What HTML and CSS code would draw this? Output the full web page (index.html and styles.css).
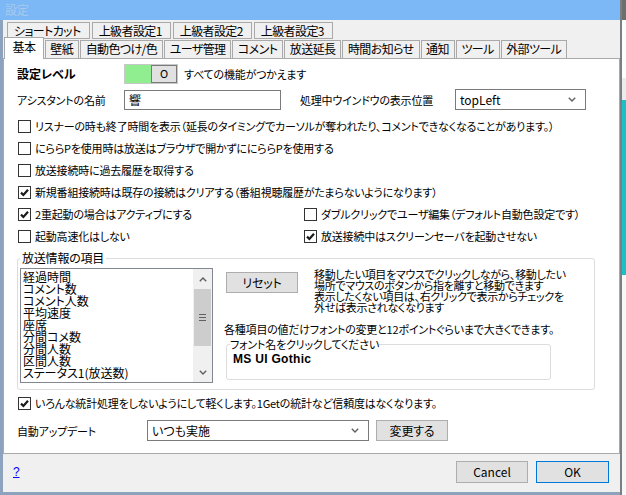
FILE: index.html
```html
<!DOCTYPE html>
<html lang="ja">
<head>
  <meta charset="UTF-8" />
  <title>設定</title>
  <link rel="stylesheet" href="styles.css">
</head>
<body>
  <div class="win">
    <header class="titlebar">設定</header>

    <div class="frame">
      <!-- タブ -->
      <nav class="tabs">
        <div class="tabrow back">
          <span class="tab">ショートカット</span>
          <span class="tab">上級者設定1</span>
          <span class="tab">上級者設定2</span>
          <span class="tab">上級者設定3</span>
        </div>
        <div class="tabrow front">
          <span class="tab on">基本</span>
          <span class="tab">壁紙</span>
          <span class="tab">自動色つけ/色</span>
          <span class="tab">ユーザ管理</span>
          <span class="tab">コメント</span>
          <span class="tab">放送延長</span>
          <span class="tab">時間お知らせ</span>
          <span class="tab">通知</span>
          <span class="tab">ツール</span>
          <span class="tab">外部ツール</span>
        </div>
      </nav>

      <!-- 基本タブ -->
      <main class="panel">
        <div class="row">
          <span class="label strong">設定レベル</span>
          <span class="toggle"><span class="knob">O</span></span>
          <span class="hint">すべての機能がつかえます</span>
        </div>

        <div class="row field">
          <span class="label">アシスタントの名前</span>
          <span class="input name">響</span>
          <span class="label pos-label">処理中ウインドウの表示位置</span>
          <span class="select pos">topLeft
            <svg viewBox="0 0 8 5"><path d="M.8 .8 4 4 7.2 .8"/></svg>
          </span>
        </div>

        <div class="checks">
          <label class="chk wide"><span class="box"></span>リスナーの時も終了時間を表示（延長のタイミングでカーソルが奪われたり、コメントできなくなることがあります。）</label>
          <label class="chk wide"><span class="box"></span>にららPを使用時は放送はブラウザで開かずににららPを使用する</label>
          <label class="chk wide"><span class="box"></span>放送接続時に過去履歴を取得する</label>
          <label class="chk wide"><span class="box on"><svg viewBox="0 0 11 11"><path d="M2 5.6 4.4 8 9 2.8"/></svg></span>新規番組接続時は既存の接続はクリアする（番組視聴履歴がたまらないようになります）</label>
          <label class="chk"><span class="box on"><svg viewBox="0 0 11 11"><path d="M2 5.6 4.4 8 9 2.8"/></svg></span>2重起動の場合はアクティブにする</label>
          <label class="chk right"><span class="box"></span>ダブルクリックでユーザ編集（デフォルト自動色設定です）</label>
          <label class="chk"><span class="box"></span>起動高速化はしない</label>
          <label class="chk right"><span class="box on"><svg viewBox="0 0 11 11"><path d="M2 5.6 4.4 8 9 2.8"/></svg></span>放送接続中はスクリーンセーバを起動させない</label>
        </div>

        <fieldset class="group">
          <legend>放送情報の項目</legend>
          <div class="listbox">
            <ul class="items">
              <li>経過時間</li>
              <li>コメント数</li>
              <li>コメント人数</li>
              <li>平均速度</li>
              <li>座席</li>
              <li>分間コメ数</li>
              <li>分間人数</li>
              <li>区間人数</li>
              <li>ステータス1(放送数)</li>
            </ul>
            <div class="vscroll">
              <span class="arrow"><svg viewBox="0 0 8 5"><path d="M.8 4.2 4 1 7.2 4.2"/></svg></span>
              <span class="thumb"><i></i><i></i><i></i></span>
              <span class="track"></span>
              <span class="arrow"><svg viewBox="0 0 8 5"><path d="M.8 .8 4 4 7.2 .8"/></svg></span>
            </div>
          </div>

          <div class="side">
            <div class="side-top">
              <button class="btn reset">リセット</button>
              <p class="howto">移動したい項目をマウスでクリックしながら、移動したい<br>場所でマウスのボタンから指を離すと移動できます<br>表示したくない項目は、右クリックで表示からチェックを<br>外せば表示されなくなります</p>
            </div>
            <p class="note">各種項目の値だけフォントの変更と12ポイントぐらいまで大きくできます。</p>
            <fieldset class="fontbox">
              <legend>フォント名をクリックしてください</legend>
              <b>MS UI Gothic</b>
            </fieldset>
          </div>
        </fieldset>

        <label class="chk light"><span class="box on"><svg viewBox="0 0 11 11"><path d="M2 5.6 4.4 8 9 2.8"/></svg></span>いろんな統計処理をしないようにして軽くします。1Getの統計など信頼度はなくなります。</label>

        <div class="row update">
          <span class="label">自動アップデート</span>
          <span class="select upd">いつも実施
            <svg viewBox="0 0 8 5"><path d="M.8 .8 4 4 7.2 .8"/></svg>
          </span>
          <button class="btn change">変更する</button>
        </div>
      </main>

      <footer class="foot">
        <a class="help" href="#">?</a>
        <button class="btn cancel">Cancel</button>
        <button class="btn ok">OK</button>
      </footer>
    </div>
  </div>

  <!-- ウインドウの後ろのデスクトップ -->
  <div class="behind">
    <i class="b-top"></i><i class="b-white"></i><i class="b-gray"></i><i class="b-cyan"></i><i class="b-rest"></i>
  </div>
</body>
</html>
```

FILE: styles.css
```css
/* ─── 0. reset ───────────────────────────── */
*,*::before,*::after{box-sizing:border-box;margin:0;padding:0}
html,body{width:626px;height:495px;overflow:hidden;background:#fff}
body{
  display:flex;color:#000;
  font:11px/14px "Noto Sans CJK JP","Noto Sans",sans-serif;
  letter-spacing:-.2px;
  font-feature-settings:"palt";
}
button{font:inherit;color:inherit;letter-spacing:inherit;font-feature-settings:inherit}

/* ─── 1. window frame ───────────────────── */
.win{
  width:622px;height:495px;display:flex;flex-direction:column;
  background:#f0f0f0;border-right:2px solid #7a7f86;
}
.titlebar{height:20px;padding:3px 0 0 5px;background:#7cb8f5;color:#a6c9ec;font-size:12px;line-height:14px}
.frame{
  flex:1;display:flex;flex-direction:column;
  border-left:3px solid #8da3bd;border-bottom:3px solid #8da3bd;
}

/* ─── 2. tabs ───────────────────────────── */
.tabs{height:38px}
.tabrow{display:flex}
.tabrow.back{margin-top:2px;height:17px;padding-left:4px;gap:2px}
.tabrow.front{height:19px;padding-left:1px;align-items:flex-end;gap:1px}
.tab{
  height:17px;padding:0 8px 0 6px;border:1px solid #a9a9a9;background:#f0f0f0;
  font-size:12px;line-height:15px;white-space:nowrap;letter-spacing:-.6px;
}
.front .tab{height:18px;padding:0 5px 0 4.5px;border-bottom:none;line-height:16px}
.front .tab.on{
  position:relative;z-index:1;height:22px;margin-bottom:-1px;
  padding:0 7.5px;background:#fff;line-height:18px;
}

/* ─── 3. panel ──────────────────────────── */
.panel{
  height:396px;padding:5px 12px 0 13px;
  background:#fff;border:1px solid #a9a9a9;
}
.row{display:flex;align-items:center;height:20px}
.label{width:107px;flex:none;white-space:nowrap}
.strong{font-weight:bold;font-size:12px;letter-spacing:0}
.toggle{
  display:flex;justify-content:flex-end;width:54px;height:20px;flex:none;
  background:#90ee90;border:1px solid #c8c8c8;
}
.knob{
  width:26px;height:18px;border:1px solid #7a7a7a;background:#e1e1e1;
  text-align:center;font-size:11px;line-height:15px;
}
.hint{margin-left:6px}

.field{margin-top:5px;height:21px}
.input{
  width:157px;height:20px;padding:0 4px;flex:none;
  border:1px solid #7a7a7a;background:#fff;font-size:12px;line-height:18px;
}
.pos-label{width:155px;margin-left:19px}
.select{
  display:flex;align-items:center;justify-content:space-between;flex:none;
  height:21px;padding:0 9px 0 4px;border:1px solid #7a7a7a;background:#fff;
  font-size:12px;letter-spacing:0;
}
.select svg,.arrow svg{width:8px;height:5px;fill:none;stroke:#606060;stroke-width:1.4}
.pos{width:131px}

/* ─── 4. checkboxes ─────────────────────── */
.checks{margin-top:5px;display:grid;grid-template-columns:286px 1fr}
.chk{display:flex;align-items:center;gap:4px;height:22px;white-space:nowrap}
.chk.wide{grid-column:1 / -1}
.box{
  display:grid;place-items:center;width:13px;height:13px;margin-left:1px;
  border:1px solid #333;background:#fff;flex:none;
}
.box svg{width:11px;height:11px;fill:none;stroke:#1a1a1a;stroke-width:2.2}

/* ─── 5. 放送情報の項目 ─────────────────── */
.group{
  display:flex;min-width:0;width:578px;height:139px;margin-top:4px;
  padding:3px 2px 6px 2px;border:1px solid #dcdcdc;border-radius:3px;
}
.group > legend{padding:0 2px;font-size:12px;line-height:14px}
.listbox{
  display:flex;width:193px;height:115px;flex:none;
  border:1px solid #828790;background:#fff;
}
.items{
  flex:1;list-style:none;padding:2px 0 0 2px;
  font-size:12px;line-height:12px;letter-spacing:0;white-space:nowrap;overflow:hidden;
}
.vscroll{display:flex;flex-direction:column;width:19px;background:#f0f0f0}
.arrow{display:grid;place-items:center;height:20px}
.thumb{
  display:flex;flex-direction:column;align-items:center;justify-content:center;gap:2px;
  height:57px;margin:0 1px;background:#cdcdcd;
}
.thumb i{width:7px;height:1px;background:#606060}
.track{flex:1}

.side{margin-left:11px;display:flex;flex-direction:column}
.side-top{display:flex;align-items:flex-start}
.btn{
  height:21px;border:1px solid #adadad;background:#e1e1e1;
  text-align:center;line-height:19px;
}
.reset{width:72px;margin:4px 0 0 2px;font-size:12px}
.howto{margin:1px 0 0 16px;line-height:11px;letter-spacing:-.3px;white-space:nowrap}
.note{margin-top:9px;white-space:nowrap}
.fontbox{
  width:325px;height:43px;margin:1px 0 0 2px;
  padding:0 3px 0 3px;border:1px solid #dcdcdc;border-radius:3px;
}
.fontbox legend{line-height:14px;padding:0}
.fontbox b{margin-left:3px;font-family:"Liberation Sans","Noto Sans",sans-serif;font-size:12px;letter-spacing:.3px}

/* ─── 6. bottom rows ────────────────────── */
.chk.light{margin-top:2px}
.update{margin-top:6px;height:21px}
.update .label{width:130px}
.upd{width:222px}
.change{width:72px;margin-left:7px;font-size:12px}

/* ─── 7. footer ─────────────────────────── */
.foot{flex:1;display:flex;align-items:flex-start;padding:7px 11px 0 10px}
.help{margin-top:4px;color:#0000ff;font-family:"Liberation Sans",sans-serif;font-size:12px}
.foot .btn{height:22px;line-height:20px;font-size:12px;letter-spacing:0}
.cancel{width:72px;margin-left:auto}
.ok{width:73px;margin-left:8px;border-color:#0078d7}

/* ─── 8. desktop behind ─────────────────── */
.behind{flex:1;display:flex;flex-direction:column}
.behind i{display:block}
.b-top{height:20px;background:#6e6e6e}
.b-white{height:58px;background:#fdfdfd}
.b-gray{height:22px;background:#ececec}
.b-cyan{height:175px;background:#1bbfc4}
.b-rest{flex:1;background:#f7f7f7}
```
